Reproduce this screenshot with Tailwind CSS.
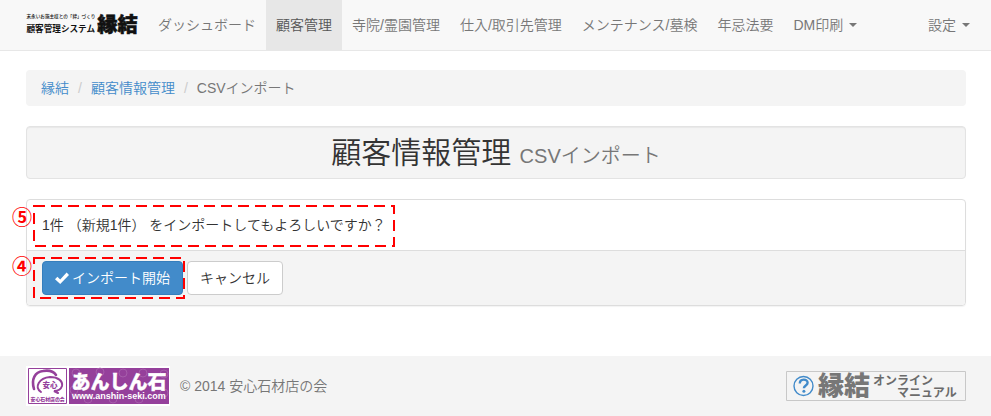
<!DOCTYPE html>
<html lang="ja">
<head>
<meta charset="utf-8">
<meta name="viewport" content="width=device-width, initial-scale=1">
<title>顧客情報管理 CSVインポート</title>
<script src="https://cdn.jsdelivr.net/npm/@tailwindcss/browser@4"></script>
</head>
<body class="flex min-h-screen flex-col bg-white font-['Liberation_Sans','Noto_Sans_CJK_JP',sans-serif] text-sm font-[350] leading-5 text-[#333]">
<header class="border-b border-[#e7e7e7] bg-[#f8f8f8]">
  <nav class="flex h-[50px] items-center whitespace-nowrap pl-[26px] pr-[11px] text-[#777]">
    <a href="#" class="mr-[10px] shrink-0" aria-label="縁結">
      <svg class="h-6 w-28 overflow-visible font-['Noto_Sans_CJK_JP',sans-serif]" viewBox="0 0 1120 240" fill="#111">
        <text x="5" y="53" font-size="46" font-weight="500">末永いお施主様との「絆」づくり</text>
        <text x="5" y="190" font-size="86" font-weight="700">顧客管理システム</text>
        <text x="712" y="190" font-size="202" font-weight="900" stroke="#111" stroke-width="5">縁結</text>
      </svg>
    </a>
    <a href="#" class="px-[10px] py-[15px]">ダッシュボード</a>
    <a href="#" class="bg-[#e7e7e7] px-[10px] py-[15px] text-[#555]">顧客管理</a>
    <a href="#" class="px-[10px] py-[15px]">寺院/霊園管理</a>
    <a href="#" class="px-[10px] py-[15px]">仕入/取引先管理</a>
    <a href="#" class="px-[10px] py-[15px]">メンテナンス/墓検</a>
    <a href="#" class="px-[10px] py-[15px]">年忌法要</a>
    <button type="button" class="flex items-center gap-[6px] px-[10px] py-[15px]">DM印刷<svg class="h-1 w-2" viewBox="0 0 8 4" fill="#777"><path d="M0 0h8L4 4z"/></svg></button>
    <button type="button" class="ml-auto flex items-center gap-[6px] px-[10px] py-[15px]">設定<svg class="h-1 w-2" viewBox="0 0 8 4" fill="#777"><path d="M0 0h8L4 4z"/></svg></button>
  </nav>
</header>

<main class="flex flex-1 flex-col gap-5 pl-[26px] pr-[25px] pt-[19px]">
  <nav aria-label="パンくず">
    <ol class="flex rounded bg-[#f4f4f4] px-[15px] py-2">
      <li><a href="#" class="text-[#428bca]">縁結</a></li>
      <li class="before:px-[9px] before:text-[#ccc] before:content-['/']"><a href="#" class="text-[#428bca]">顧客情報管理</a></li>
      <li class="text-[#777] before:px-[9px] before:text-[#ccc] before:content-['/']">CSVインポート</li>
    </ol>
  </nav>

  <h1 class="rounded border border-[#e3e3e3] bg-[#f4f4f4] py-[9px] text-center text-[30px] leading-[33px] shadow-[inset_0_1px_1px_rgba(0,0,0,0.05)]">顧客情報管理 <small class="text-xl leading-none text-[#777]">CSVインポート</small></h1>

  <form class="rounded border border-[#ddd] shadow-[0_1px_1px_rgba(0,0,0,0.05)]">
    <div class="relative p-[15px]">
      <p>1件 （新規1件） をインポートしてもよろしいですか？</p>
      <svg class="pointer-events-none absolute left-[6px] top-[5px] h-[42px] w-[362px]" viewBox="0 0 362 42" fill="none" stroke="#f00" stroke-width="2"><rect x="1" y="1" width="360" height="40" stroke-dasharray="11 6"/></svg>
      <span class="absolute -left-[15px] top-[8px] text-xl font-bold leading-5 text-[#f00]">⑤</span>
    </div>
    <div class="relative flex gap-1 rounded-b border-t border-[#ddd] bg-[#f4f4f4] px-[15px] py-[10px]">
      <button type="submit" class="flex items-center gap-[3px] rounded border border-[#357ebd] bg-[#428bca] px-3 py-[6px] text-white"><svg class="h-[14px] w-[14px]" viewBox="0 0 14 14" fill="#fff"><path d="M0 8.200 2.400 5.800 5.200 8.500 11.600 1.600 14 3.900 5.200 13z"/></svg>インポート開始</button>
      <button type="button" class="rounded border border-[#ccc] bg-white px-3 py-[6px]">キャンセル</button>
      <svg class="pointer-events-none absolute left-[6px] top-[6px] h-[42px] w-[152px]" viewBox="0 0 152 42" fill="none" stroke="#f00" stroke-width="2"><rect x="1" y="1" width="150" height="40" stroke-dasharray="11 6"/></svg>
      <span class="absolute -left-[15px] top-[6px] text-xl font-bold leading-5 text-[#f00]">④</span>
    </div>
  </form>
</main>

<footer class="flex h-[60px] items-center bg-[#f4f4f4] pl-[26px] pr-[25px] text-[#777]">
  <a href="#" aria-label="あんしん石" class="mr-[10px]">
    <svg class="h-10 w-36 overflow-visible font-['Noto_Sans_CJK_JP',sans-serif]" viewBox="0 0 144 40">
      <path fill="#fff" d="M0 0h144v40H0z"/>
      <path fill="#fff" stroke="#95409b" d="M2.500 2.500h38v35h-38z"/>
      <path fill="#95409b" d="M43 2h100v36H43z"/>
      <g fill="none" stroke="#ad68b2" stroke-width=".7"><circle cx="50" cy="7" r="4"/><circle cx="74" cy="6" r="4"/><circle cx="97" cy="7" r="4"/><circle cx="117" cy="7" r="4"/><circle cx="138" cy="8" r="4"/><circle cx="48" cy="24" r="4"/><circle cx="138" cy="27" r="4"/><circle cx="62" cy="33" r="4"/><circle cx="87" cy="33" r="4"/><circle cx="113" cy="33" r="4"/></g>
      <g fill="none" stroke="#95409b" stroke-linecap="round"><path stroke-width="2.600" d="M8 23C5 13 9 6 17 5c6-1 11 1 13 4"/><path stroke-width="2" d="M15 26c-7-5-2-14 9-15 8 0 13 4 12 9-1 3-4 5-8 5l4 2"/></g>
      <text x="16.500" y="21.500" font-size="7.500" font-weight="900" fill="#95409b">安心</text>
      <text x="4.500" y="35" font-size="4.900" font-weight="900" fill="#95409b">安心石材店の会</text>
      <text x="45.500" y="22.500" font-size="19" font-weight="900" fill="#fff" stroke="#fff" stroke-width=".4">あんしん石</text>
      <text x="46" y="33" font-family="Liberation Sans, sans-serif" font-size="9" font-weight="700" fill="#fff">www.anshin-seki.com</text>
    </svg>
  </a>
  <p>© 2014 安心石材店の会</p>
  <a href="#" aria-label="縁結 オンラインマニュアル" class="ml-auto">
    <svg class="h-[30px] w-[180px] overflow-visible font-['Noto_Sans_CJK_JP',sans-serif]" viewBox="0 0 180 30">
      <path fill="none" stroke="#c8c8c8" d="M.5.5h179v29H.5z"/>
      <circle cx="17.500" cy="15" r="9.500" fill="none" stroke="#428bca" stroke-width="1.400"/>
      <path d="M13.800 12.500c0-5 7.800-5 7.800-.7 0 2.800-3.700 2.700-3.700 5.500" fill="none" stroke="#428bca" stroke-width="2.400"/>
      <circle cx="17.900" cy="20.200" r="1.500" fill="#428bca"/>
      <text x="32" y="24" font-size="26" font-weight="900" fill="#777">縁結</text>
      <text x="87" y="14" font-size="12" font-weight="700" fill="#6b6b6b">オンライン</text>
      <text x="111" y="26" font-size="12" font-weight="700" fill="#6b6b6b">マニュアル</text>
    </svg>
  </a>
</footer>
</body>
</html>
